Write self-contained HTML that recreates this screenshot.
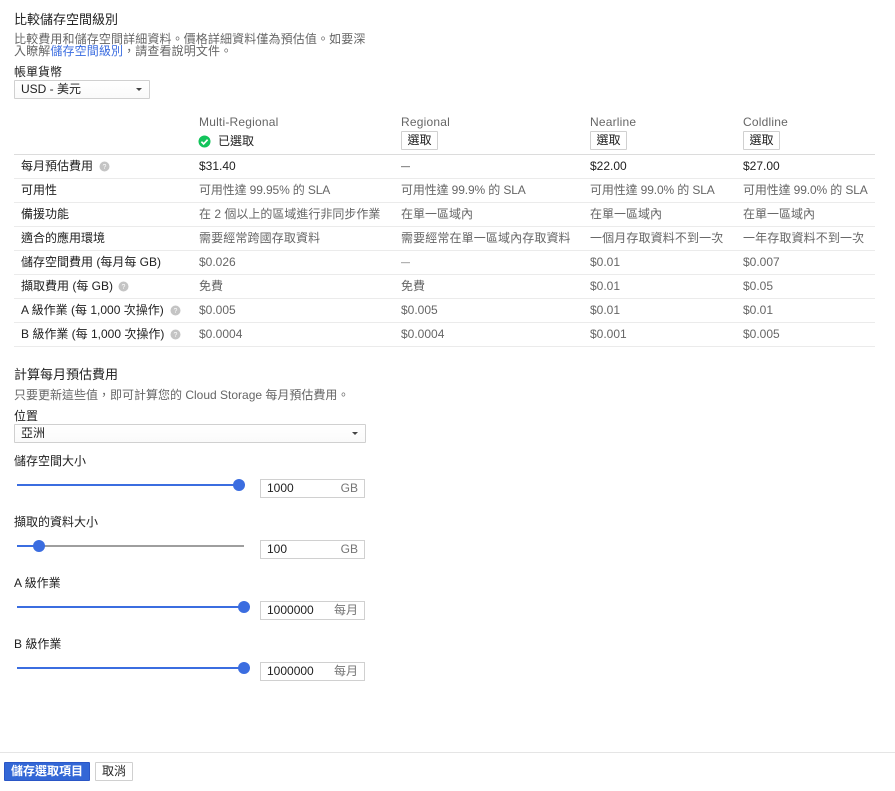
<!DOCTYPE html>
<html lang="zh-TW"><head><meta charset="utf-8"><title>比較儲存空間級別</title>
<style>
html,body{margin:0;padding:0;background:#fff}
body{width:895px;height:791px;position:relative;overflow:hidden;font-family:"Liberation Sans","Noto Sans CJK TC",sans-serif;font-size:12px;color:#212121}
.t{position:absolute;white-space:nowrap;line-height:16px;height:16px}
.g{color:#666}
.c{letter-spacing:.12px}
.s{letter-spacing:-.13px}
.d{font-size:9px}
.line{position:absolute;left:14px;width:861px;height:1px;background:#ebebeb}
.h{position:absolute;width:13px;height:13px}
.btn{position:absolute;box-sizing:border-box;width:37px;height:19px;border:1px solid #d0d0d0;border-radius:1px;background:#fff;text-align:center;line-height:17px;top:131px}
.sel{position:absolute;box-sizing:border-box;height:19px;border:1px solid #d0d0d0;border-radius:1px;background:linear-gradient(#fff,#fafafa);line-height:17px;padding-left:6px}
.arr{position:absolute;width:0;height:0;border-left:3.5px solid transparent;border-right:3.5px solid transparent;border-top:3px solid #444}
.inp{position:absolute;left:260px;width:105px;height:19px;box-sizing:border-box;border:1px solid #d0d0d0;line-height:17px;padding-left:6px;background:#fff}
.inp span{position:absolute;right:6px;top:0;color:#757575}
.tr{position:absolute;height:2px;background:#3b6de0}
.tk{position:absolute;width:12px;height:12px;border-radius:50%;background:#3b6de0}
</style></head><body>
<div class="t" style="left:14px;top:12px;font-size:13px">比較儲存空間級別</div>
<div class="t g c" style="left:14px;top:31px">比較費用和儲存空間詳細資料。價格詳細資料僅為預估值。如要深</div>
<div class="t g c" style="left:14px;top:43px">入瞭解<span style="color:#3b6de0">儲存空間級別</span>，請查看說明文件。</div>
<div class="t" style="left:14px;top:64px">帳單貨幣</div>
<div class="sel" style="left:14px;top:80px;width:136px">USD - 美元</div><div class="arr" style="left:136px;top:88px"></div>

<div class="t g" style="left:199px;top:114px;letter-spacing:.2px">Multi-Regional</div>
<div class="t g" style="left:401px;top:114px;letter-spacing:.2px">Regional</div>
<div class="t g" style="left:590px;top:114px;letter-spacing:.2px">Nearline</div>
<div class="t g" style="left:743px;top:114px;letter-spacing:.2px">Coldline</div>
<svg style="position:absolute;left:198px;top:135px" width="13" height="13" viewBox="0 0 13 13"><circle cx="6.5" cy="6.5" r="6" fill="#12c45b"/><path d="M3.4 6.7l2.2 2.2 4-4.2" fill="none" stroke="#fff" stroke-width="1.7"/></svg>
<div class="t" style="left:218px;top:133px">已選取</div>
<div class="btn" style="left:401px">選取</div>
<div class="btn" style="left:590px">選取</div>
<div class="btn" style="left:743px">選取</div>

<div class="line" style="top:154px;background:#dcdcdc"></div>
<div class="line" style="top:178px"></div><div class="line" style="top:202px"></div><div class="line" style="top:226px"></div><div class="line" style="top:250px"></div><div class="line" style="top:274px"></div><div class="line" style="top:298px"></div><div class="line" style="top:322px"></div><div class="line" style="top:346px"></div>

<div class="t" style="left:21px;top:158px">每月預估費用</div>
<div class="t" style="left:21px;top:182px">可用性</div>
<div class="t" style="left:21px;top:206px">備援功能</div>
<div class="t" style="left:21px;top:230px">適合的應用環境</div>
<div class="t" style="left:21px;top:254px">儲存空間費用 (每月每 GB)</div>
<div class="t" style="left:21px;top:278px">擷取費用 (每 GB)</div>
<div class="t" style="left:21px;top:302px">A 級作業 (每 1,000 次操作)</div>
<div class="t" style="left:21px;top:326px">B 級作業 (每 1,000 次操作)</div>

<svg class="h" style="left:98px;top:160px" viewBox="0 0 13 13"><circle cx="6.5" cy="6.5" r="5" fill="#c4c4c4"/><text x="6.5" y="9" font-size="7" text-anchor="middle" fill="#fff">?</text></svg>
<svg class="h" style="left:117px;top:280px" viewBox="0 0 13 13"><circle cx="6.5" cy="6.5" r="5" fill="#c4c4c4"/><text x="6.5" y="9" font-size="7" text-anchor="middle" fill="#fff">?</text></svg>
<svg class="h" style="left:169px;top:304px" viewBox="0 0 13 13"><circle cx="6.5" cy="6.5" r="5" fill="#c4c4c4"/><text x="6.5" y="9" font-size="7" text-anchor="middle" fill="#fff">?</text></svg>
<svg class="h" style="left:169px;top:328px" viewBox="0 0 13 13"><circle cx="6.5" cy="6.5" r="5" fill="#c4c4c4"/><text x="6.5" y="9" font-size="7" text-anchor="middle" fill="#fff">?</text></svg>

<div class="t" style="left:199px;top:158px">$31.40</div>
<div class="t d" style="left:401px;top:158px">—</div>
<div class="t" style="left:590px;top:158px">$22.00</div>
<div class="t" style="left:743px;top:158px">$27.00</div>

<div class="t g s" style="left:199px;top:182px">可用性達 99.95% 的 SLA</div>
<div class="t g s" style="left:401px;top:182px">可用性達 99.9% 的 SLA</div>
<div class="t g s" style="left:590px;top:182px">可用性達 99.0% 的 SLA</div>
<div class="t g s" style="left:743px;top:182px">可用性達 99.0% 的 SLA</div>

<div class="t g" style="left:199px;top:206px">在 2 個以上的區域進行非同步作業</div>
<div class="t g" style="left:401px;top:206px">在單一區域內</div>
<div class="t g" style="left:590px;top:206px">在單一區域內</div>
<div class="t g" style="left:743px;top:206px">在單一區域內</div>

<div class="t g c" style="left:199px;top:230px">需要經常跨國存取資料</div>
<div class="t g c" style="left:401px;top:230px">需要經常在單一區域內存取資料</div>
<div class="t g c" style="left:590px;top:230px">一個月存取資料不到一次</div>
<div class="t g c" style="left:743px;top:230px">一年存取資料不到一次</div>

<div class="t g" style="left:199px;top:254px">$0.026</div>
<div class="t g d" style="left:401px;top:254px">—</div>
<div class="t g" style="left:590px;top:254px">$0.01</div>
<div class="t g" style="left:743px;top:254px">$0.007</div>

<div class="t g" style="left:199px;top:278px">免費</div>
<div class="t g" style="left:401px;top:278px">免費</div>
<div class="t g" style="left:590px;top:278px">$0.01</div>
<div class="t g" style="left:743px;top:278px">$0.05</div>

<div class="t g" style="left:199px;top:302px">$0.005</div>
<div class="t g" style="left:401px;top:302px">$0.005</div>
<div class="t g" style="left:590px;top:302px">$0.01</div>
<div class="t g" style="left:743px;top:302px">$0.01</div>

<div class="t g" style="left:199px;top:326px">$0.0004</div>
<div class="t g" style="left:401px;top:326px">$0.0004</div>
<div class="t g" style="left:590px;top:326px">$0.001</div>
<div class="t g" style="left:743px;top:326px">$0.005</div>

<div class="t" style="left:14px;top:367px;font-size:13px">計算每月預估費用</div>
<div class="t g" style="left:14px;top:387px">只要更新這些值，即可計算您的 Cloud Storage 每月預估費用。</div>
<div class="t" style="left:14px;top:408px">位置</div>
<div class="sel" style="left:14px;top:424px;width:352px">亞洲</div><div class="arr" style="left:352px;top:432px"></div>

<div class="t" style="left:14px;top:453px">儲存空間大小</div>
<div class="tr" style="left:17px;top:484px;width:222px"></div><div class="tk" style="left:233px;top:479px"></div>
<div class="inp" style="top:479px">1000<span>GB</span></div>

<div class="t" style="left:14px;top:514px">擷取的資料大小</div>
<div class="tr" style="left:17px;top:545px;width:227px;background:#9e9e9e"></div>
<div class="tr" style="left:17px;top:545px;width:22px"></div><div class="tk" style="left:33px;top:540px"></div>
<div class="inp" style="top:540px">100<span>GB</span></div>

<div class="t" style="left:14px;top:575px">A 級作業</div>
<div class="tr" style="left:17px;top:606px;width:227px"></div><div class="tk" style="left:238px;top:601px"></div>
<div class="inp" style="top:601px">1000000<span>每月</span></div>

<div class="t" style="left:14px;top:636px">B 級作業</div>
<div class="tr" style="left:17px;top:667px;width:227px"></div><div class="tk" style="left:238px;top:662px"></div>
<div class="inp" style="top:662px">1000000<span>每月</span></div>

<div style="position:absolute;left:0;top:752px;width:895px;height:1px;background:#e5e5e5"></div>
<div style="position:absolute;box-sizing:border-box;left:4px;top:762px;width:86px;height:19px;background:#3367d6;border:1px solid #2a56c6;border-radius:1px;color:#fff;font-weight:bold;text-align:center;line-height:17px">儲存選取項目</div>
<div style="position:absolute;box-sizing:border-box;left:95px;top:762px;width:38px;height:19px;background:#fff;border:1px solid #d0d0d0;border-radius:1px;text-align:center;line-height:17px">取消</div>
</body></html>
